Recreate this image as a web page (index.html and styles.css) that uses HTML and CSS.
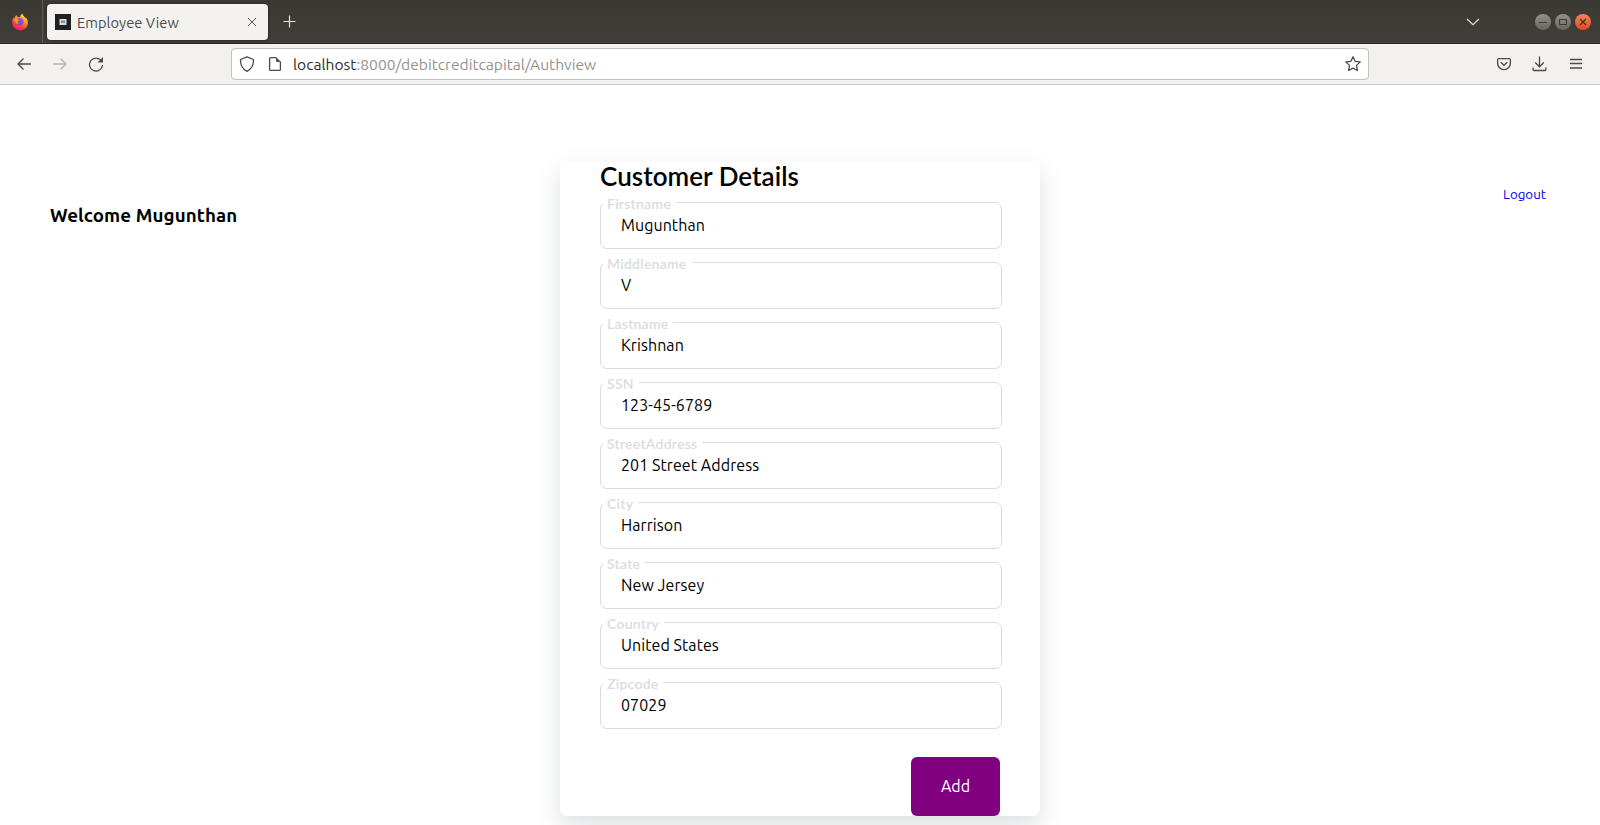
FILE: index.html
```html
<!DOCTYPE html>
<html lang="en">
<head>
<meta charset="utf-8">
<title>Employee View</title>
<link rel="stylesheet" href="styles.css">
</head>
<body>
<div class="tabstrip">
  <div class="brand">
    <svg width="18" height="18" viewBox="0 0 18 18">
      <defs>
        <linearGradient id="flame" x1="0.85" y1="0" x2="0.3" y2="1"><stop offset="0.1" stop-color="#ffe22e"/><stop offset="0.45" stop-color="#ff8a1e"/><stop offset="0.75" stop-color="#ff3647"/><stop offset="1" stop-color="#e31587"/></linearGradient>
        <linearGradient id="globe" x1="0.8" y1="0" x2="0.2" y2="1"><stop offset="0" stop-color="#a04fe8"/><stop offset="1" stop-color="#5b48d8"/></linearGradient>
      </defs>
      <path d="M1.200 10.200C.9 7.600 1.600 5.600 2.800 4.200c.1.800.3 1.200.7 1.500C3.700 4 4.300 2.800 5.600 2c0 1.400.8 2 2 2.200h1.500C9.300 2.500 10 1.300 11.300.5c.2 1.700 1.300 2.400 2.500 3.700.3.300.5.700.7 1.100l.4-.9c1.500 1.700 2.100 3.800 1.900 6-.4 4-3.700 6.900-7.700 6.900-4.100 0-7.500-3.100-7.900-7.100z" fill="url(#flame)"/>
      <circle cx="9" cy="8.600" r="3.600" fill="url(#globe)"/>
      <path d="M2.800 6.200c1.600-.9 3.300-.6 4.300.3.800.1 1.300.2 1.300.6-.2.700-1.400.8-1.700 1.400-.2.700.6 1.500 1.600 1.400-.9 1.100-2.700 1.100-3.800-.2-.7-1-.9-2.200-1.700-3.500z" fill="#ff971d"/>
    </svg>
  </div>
  <div class="tab">
    <svg class="favicon" width="16" height="16" viewBox="0 0 16 16"><rect width="16" height="16" fill="#202020"/><rect x="4.500" y="5" width="7" height="6" fill="#d4dcde"/><path d="M6 6.500h4v2.500H6z" fill="#7898a4"/></svg>
    <span class="tab-title">Employee View</span>
    <svg class="tab-close" width="10" height="10" viewBox="0 0 10 10"><path d="M1 1l8 8M9 1L1 9" stroke="#55534f" fill="none"/></svg>
  </div>
  <svg class="new-tab" width="13" height="13" viewBox="0 0 13 13"><path d="M6.500.5v12M.5 6.500h12" stroke="#e6e3df" stroke-width="1.200" fill="none"/></svg>
  <div class="window-controls">
    <svg class="chevron" width="14" height="8" viewBox="0 0 14 8"><path d="M1 1l6 5.700L13 1" stroke="#dedbd3" stroke-width="1.300" fill="none"/></svg>
    <span class="wbtn"><svg width="16" height="16"><path d="M4 8.500h8" stroke="#3b3a35"/></svg></span>
    <span class="wbtn"><svg width="16" height="16"><rect x="4.500" y="5.500" width="7" height="5" fill="none" stroke="#3b3a35"/></svg></span>
    <span class="wbtn wbtn-close"><svg width="16" height="16"><path d="M5 5l6 6M11 5l-6 6" stroke="#4a2a1b" stroke-width="1.200"/></svg></span>
  </div>
</div>
<div class="toolbar">
  <div class="nav">
    <svg width="16" height="16" viewBox="0 0 16 16"><path d="M15 8H2M7.500 2.500L2 8l5.500 5.500" stroke="#4c4b48" stroke-width="1.300" fill="none"/></svg>
    <svg width="16" height="16" viewBox="0 0 16 16"><path d="M1 8h13M8.500 2.500L14 8l-5.500 5.500" stroke="#b4b2af" stroke-width="1.300" fill="none"/></svg>
    <svg width="16" height="16" viewBox="0 0 16 16"><path d="M13.300 4.800A6.500 6.500 0 1 0 14.500 9" stroke="#4c4b48" stroke-width="1.300" fill="none"/><path d="M15 1v5.500H9.500z" fill="#4c4b48"/></svg>
  </div>
  <div class="urlbar">
    <svg width="16" height="16" viewBox="0 0 16 16"><path d="M8 .8l6.500 2.700c.2 5-1.500 9.200-6.500 11.800C3 12.700 1.300 8.500 1.500 3.500z" stroke="#4c4b48" stroke-width="1.300" stroke-linejoin="round" fill="none"/></svg>
    <svg class="page-icon" width="14" height="16" viewBox="0 0 14 16"><path d="M8.500 1.600H2.600a1 1 0 0 0-1 1v10.800a1 1 0 0 0 1 1h8.800a1 1 0 0 0 1-1V5.500" stroke="#4c4b48" stroke-width="1.300" fill="none"/><path d="M8 1l5 5H9a1 1 0 0 1-1-1z" fill="#4c4b48"/></svg>
    <span class="url"><span class="host">localhost</span>:8000/debitcreditcapital/Authview</span>
    <svg class="star" width="16" height="16" viewBox="0 0 16 16"><path d="M8 .8l2.100 4.500 5.100.6-3.700 3.500.9 5.100L8 12.100l-4.400 2.400.9-5.100L.8 5.900l5.100-.6z" stroke="#4c4b48" stroke-width="1.300" stroke-linejoin="round" fill="none"/></svg>
  </div>
  <div class="actions">
    <svg width="16" height="16" viewBox="0 0 16 16"><path d="M2.800 2.600h10.400a1.200 1.200 0 0 1 1.200 1.200v3.400a6.400 6.400 0 0 1-12.800 0V3.800a1.200 1.200 0 0 1 1.200-1.200z" stroke="#4c4b48" stroke-width="1.300" fill="none"/><path d="M4.800 6.200L8 9.300l3.200-3.100" stroke="#4c4b48" stroke-width="1.300" fill="none"/></svg>
    <svg width="16" height="16" viewBox="0 0 16 16"><path d="M7.500.5v10.300M3.200 6.500l4.300 4.300 4.300-4.300M1.100 11.500v2a1 1 0 0 0 1 1h10.800a1 1 0 0 0 1-1v-2" stroke="#4c4b48" stroke-width="1.300" fill="none"/></svg>
    <svg width="16" height="16" viewBox="0 0 16 16"><path d="M2 3.500h12M2 7.500h12M2 12h12" stroke="#4c4b48" stroke-width="1.300"/></svg>
  </div>
</div>
<main class="page">
  <h3 class="welcome">Welcome Mugunthan</h3>
  <form class="card">
    <h1 class="title">Customer Details</h1>
    <div class="field"><label class="label">Firstname</label><span class="value">Mugunthan</span></div>
    <div class="field"><label class="label">Middlename</label><span class="value">V</span></div>
    <div class="field"><label class="label">Lastname</label><span class="value">Krishnan</span></div>
    <div class="field"><label class="label">SSN</label><span class="value">123-45-6789</span></div>
    <div class="field"><label class="label">StreetAddress</label><span class="value">201 Street Address</span></div>
    <div class="field"><label class="label">City</label><span class="value">Harrison</span></div>
    <div class="field"><label class="label">State</label><span class="value">New Jersey</span></div>
    <div class="field"><label class="label">Country</label><span class="value">United States</span></div>
    <div class="field"><label class="label">Zipcode</label><span class="value">07029</span></div>
    <button class="add" type="button">Add</button>
  </form>
  <div class="side"><a class="logout">Logout</a></div>
</main>
</body>
</html>
```

FILE: styles.css
```css
* { box-sizing: border-box; }
body { margin: 0; height: 825px; overflow: hidden; background: #fff; font-family: Ubuntu, "Noto Sans", sans-serif; color: #000; }
svg { display: block; flex: none; }

.tabstrip { height: 44px; display: flex; align-items: center; background: linear-gradient(#3b3934, #403e39); border-bottom: 1px solid #282723; }
.brand { width: 43px; height: 43px; flex: none; border-right: 1px solid #5d5b56; display: flex; align-items: center; padding-left: 11px; }
.tab { width: 221px; height: 36px; margin-left: 4px; padding: 0 11px 0 8px; border-radius: 4px; background: #f4f2f0; display: flex; align-items: center; box-shadow: 0 0 3px #22211e; }
.tab-title { margin: 1px 0 0 6px; font-size: 14.67px; letter-spacing: 0.05px; color: #4c4c4c; white-space: nowrap; }
.tab-close { margin-left: auto; }
.new-tab { margin-left: 15px; }
.window-controls { margin-left: auto; padding-right: 9px; display: flex; align-items: center; gap: 4px; }
.chevron { margin-right: 51px; }
.wbtn { width: 16px; height: 16px; border-radius: 50%; background: linear-gradient(#92918b, #66655f); }
.wbtn-close { background: linear-gradient(#f4845f, #e1491b); }

.toolbar { height: 41px; display: flex; align-items: center; background: #f3f1ef; border-bottom: 1px solid #c9c6c2; }
.nav { width: 231px; display: flex; gap: 20px; padding-left: 16px; }
.urlbar { width: 1138px; height: 32px; display: flex; align-items: center; padding: 0 7px; border: 1px solid #c4c1bc; border-radius: 4px; background: #fff; }
.page-icon { margin-left: 13px; }
.url { margin-left: 11px; font-size: 15.6px; color: #929292; white-space: nowrap; }
.host { color: #2e2e2e; }
.star { margin-left: auto; }
.actions { margin-left: auto; display: flex; gap: 20px; padding-right: 16px; }

.page { display: grid; grid-template-columns: 560px 480px 560px; align-items: start; padding-top: 76px; }
.welcome { margin: 42px 0 0 50px; font-size: 18.72px; letter-spacing: 0.1px; line-height: 26px; font-weight: 700; }
.card { height: 655px; padding: 0 38px 0 40px; border-radius: 7px; background: #fff; box-shadow: 0 10px 25px rgba(92, 99, 105, 0.2); display: flex; flex-direction: column; }
.title { margin: 0 0 11px; font: 600 26px/30px Lato, sans-serif; letter-spacing: 0.05px; white-space: nowrap; }
.field { position: relative; height: 47px; margin-bottom: 13px; padding: 0 20px; border: 1px solid #dadce0; border-radius: 7px; flex: none; }
.label { position: absolute; left: 2px; top: -8px; height: 17px; overflow: hidden; padding: 0 5px 0 4px; background: #fff; color: #dadce0; font: 600 14px/18px Lato, sans-serif; letter-spacing: 0.25px; }
.value { display: block; font-size: 16px; letter-spacing: 0.07px; line-height: 45px; white-space: nowrap; }
.add { align-self: flex-end; width: 89px; height: 59px; margin: 15px 2px 0 0; padding: 0 0 2px; border: 0; border-radius: 6px; background: #800080; color: #fff; font-family: inherit; font-size: 16px; }
.side { text-align: right; }
.logout { display: block; margin: 24px 54px 0 0; font-size: 13.33px; line-height: 20px; color: #0000ee; }
```
